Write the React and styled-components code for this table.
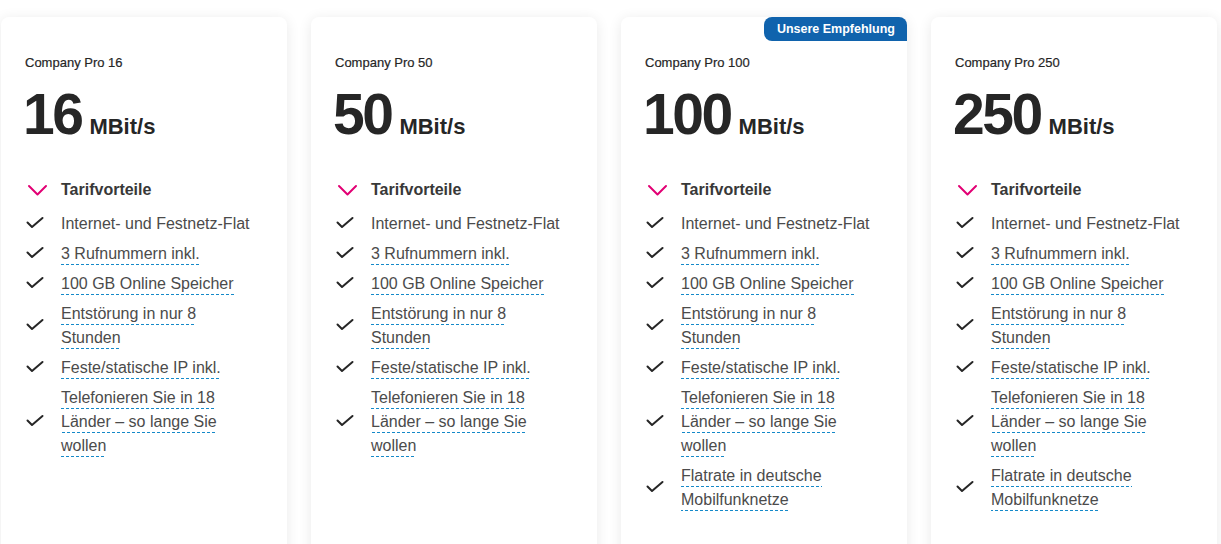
import React from "react";
import styled, { createGlobalStyle } from "styled-components";

const Global = createGlobalStyle`
  html, body { margin: 0; padding: 0; background: #ffffff; overflow: hidden; }
  body { font-family: "Liberation Sans", Arial, sans-serif; color: #262626; }
`;

const Row = styled.div`
  display: flex;
  gap: 24px;
  padding: 17px 0 0 1px;
  align-items: flex-start;
`;

const Card = styled.div`
  position: relative;
  width: 286px;
  min-height: 580px;
  box-sizing: border-box;
  background: #fff;
  border-radius: 8px;
  box-shadow: 0 2px 14px rgba(0, 0, 0, 0.09);
  padding: 37px 24px 0 24px;
`;

const Badge = styled.div`
  position: absolute;
  top: 0;
  right: 0;
  height: 24px;
  padding: 0 12px 0 13px;
  display: flex;
  align-items: center;
  background: #1063ad;
  color: #fff;
  font-weight: 700;
  font-size: 12.5px;
  border-radius: 8px 8px 0 8px;
`;

const Name = styled.div`
  font-size: 13px;
  line-height: 18px;
  color: #262626;
  -webkit-text-stroke: 0.2px #262626;
`;

const Speed = styled.div`
  display: flex;
  align-items: baseline;
  margin-top: 13px;
  height: 58px;
`;

const Number = styled.span`
  font-size: 57px;
  line-height: 58px;
  font-weight: 700;
  letter-spacing: -2.5px;
  margin-left: -2px;
  color: #262626;
`;

const Unit = styled.span`
  font-size: 22px;
  font-weight: 700;
  margin-left: 8px;
  color: #262626;
`;

const Section = styled.div`
  display: flex;
  align-items: center;
  margin-top: 35px;
  height: 24px;
  font-size: 16px;
  font-weight: 700;
  color: #383838;
`;

const IconBox = styled.span`
  width: 36px;
  flex: 0 0 36px;
  display: flex;
  align-items: center;
`;

const List = styled.ul`
  list-style: none;
  margin: 10px 0 0 0;
  padding: 0;
  display: flex;
  flex-direction: column;
  gap: 6px;
`;

const Item = styled.li`
  display: flex;
  align-items: center;
`;

const ItemText = styled.div`
  max-width: 194px;
  font-size: 16px;
  line-height: 24px;
  color: #4b4b4b;
`;

const Hint = styled.span`
  padding-bottom: 3px;
  background-image: repeating-linear-gradient(
    to right,
    #1589c9 0 3px,
    transparent 3px 5px
  );
  background-size: 100% 1px;
  background-position: left bottom;
  background-repeat: no-repeat;
`;

const Chevron = () => (
  <svg width="24" height="20" viewBox="0 0 24 20" fill="none">
    <path
      d="M4 6 L12.5 14.5 L21 6"
      stroke="#e20074"
      strokeWidth="2"
      strokeLinecap="round"
      strokeLinejoin="round"
    />
  </svg>
);

const Check = () => (
  <svg width="20" height="20" viewBox="0 0 20 20" fill="none">
    <path
      d="M2.5 8.5 L7 13 L17.5 4"
      stroke="#262626"
      strokeWidth="2"
      strokeLinecap="round"
      strokeLinejoin="round"
    />
  </svg>
);

const baseFeatures = [
  { text: "Internet- und Festnetz-Flat", hint: false },
  { text: "3 Rufnummern inkl.", hint: true },
  { text: "100 GB Online Speicher", hint: true },
  { text: "Entstörung in nur 8 Stunden", hint: true },
  { text: "Feste/statische IP inkl.", hint: true },
  { text: "Telefonieren Sie in 18 Länder – so lange Sie wollen", hint: true },
];

const extra = { text: "Flatrate in deutsche Mobilfunknetze", hint: true };

const plans = [
  { name: "Company Pro 16", speed: "16", features: baseFeatures },
  { name: "Company Pro 50", speed: "50", features: baseFeatures },
  {
    name: "Company Pro 100",
    speed: "100",
    features: [...baseFeatures, extra],
    badge: "Unsere Empfehlung",
  },
  { name: "Company Pro 250", speed: "250", features: [...baseFeatures, extra] },
];

export default function App() {
  return (
    <>
      <Global />
      <Row>
        {plans.map((p) => (
          <Card key={p.name}>
            {p.badge && <Badge>{p.badge}</Badge>}
            <Name>{p.name}</Name>
            <Speed>
              <Number>{p.speed}</Number>
              <Unit>MBit/s</Unit>
            </Speed>
            <Section>
              <IconBox>
                <Chevron />
              </IconBox>
              Tarifvorteile
            </Section>
            <List>
              {p.features.map((f) => (
                <Item key={f.text}>
                  <IconBox>
                    <Check />
                  </IconBox>
                  <ItemText>{f.hint ? <Hint>{f.text}</Hint> : f.text}</ItemText>
                </Item>
              ))}
            </List>
          </Card>
        ))}
      </Row>
    </>
  );
}
